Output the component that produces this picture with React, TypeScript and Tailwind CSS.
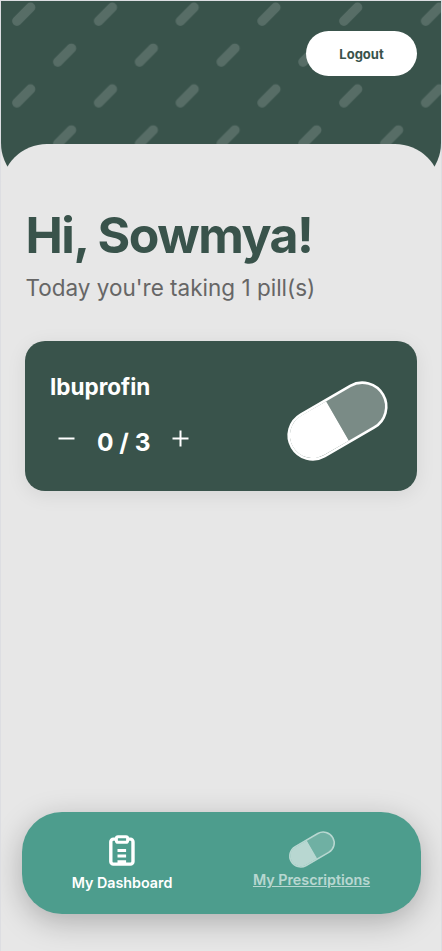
import React, { useState } from "react";

const PILLS = [{ id: "ibuprofin", name: "Ibuprofin", total: 3 }];

function HeaderPattern() {
  return (
    <svg className="absolute inset-0 h-full w-full" aria-hidden="true">
      <defs>
        <pattern id="capsules" width="81.75" height="81.75" patternUnits="userSpaceOnUse">
          <g stroke="#ffffff" strokeOpacity="0.15" strokeWidth="9.6" strokeLinecap="round">
            <path d="M15.9 20 29.5 6.4" />
            <path d="M56.8 60.9 70.4 47.3" />
          </g>
        </pattern>
      </defs>
      <rect width="100%" height="100%" fill="url(#capsules)" />
    </svg>
  );
}

function PillIcon({ className, outline = 2.6 }: { className: string; outline?: number }) {
  return (
    <svg viewBox="0 0 101 80" className={className} aria-hidden="true">
      <g transform="rotate(-30 50.5 40)">
        <path
          d="M50.5 16.8H79.2a23.2 23.2 0 0 1 0 46.4H50.5z"
          fill="#ffffff"
          fillOpacity="0.33"
        />
        <path d="M50.5 17.2H21.8a22.8 22.8 0 0 0 0 45.6H50.5z" fill="#ffffff" />
        <rect x="-2.1" y="16" width="105.2" height="48" rx="24" fill="none" stroke="#ffffff" strokeWidth={outline} />
      </g>
    </svg>
  );
}

function ClipboardIcon() {
  return (
    <svg viewBox="0 0 26 31" className="h-[31px] w-[26px]" fill="none" stroke="#ffffff" aria-hidden="true">
      <rect x="1.8" y="4.1" width="22.2" height="25" rx="2.6" strokeWidth="3.4" />
      <rect x="7.4" y="1.7" width="11.2" height="5.6" rx="1.6" strokeWidth="3" fill="#4d9d8d" />
      <path d="M8.5 15.4h8.6M8.5 20.9h8.6M8.5 26.8h8.6" strokeWidth="3" />
    </svg>
  );
}

function PillCard({ name, total }: { name: string; total: number }) {
  const [taken, setTaken] = useState(0);

  return (
    <div className="flex h-[149.5px] items-center justify-between rounded-[20px] bg-[#39534b] pr-[29px] pl-[25px] shadow-[0_4px_20px_rgba(0,0,0,0.08)]">
      <div className="h-full pt-8 text-white">
        <h2 className="text-[22.5px] leading-7 font-bold">{name}</h2>
        <div className="mt-[23px] flex h-8 items-center">
          <button className="mb-1 ml-2 cursor-pointer" aria-label="Less" onClick={() => setTaken(Math.max(0, taken - 1))}>
            <svg viewBox="0 0 17 17" className="h-[17px] w-[17px]" stroke="currentColor" strokeWidth="2">
              <path d="M0.5 8.5h16" />
            </svg>
          </button>
          <span className="mt-[3px] ml-[22px] w-[53px] text-[24.5px] leading-8 font-bold whitespace-nowrap">
            {taken} / {total}
          </span>
          <button className="mb-1 ml-[21.5px] cursor-pointer" aria-label="More" onClick={() => setTaken(Math.min(total, taken + 1))}>
            <svg viewBox="0 0 17 17" className="h-[17px] w-[17px]" stroke="currentColor" strokeWidth="2">
              <path d="M0.5 8.5h16M8.5 0.5v16" />
            </svg>
          </button>
        </div>
      </div>
      <PillIcon className="mt-2.5 h-20 w-[101px] overflow-visible" />
    </div>
  );
}

export default function App() {
  return (
    <div className="flex h-[951px] w-[442px] flex-col overflow-hidden border border-b-0 border-[#dddee2] bg-[#e7e7e7] font-['Inter',sans-serif]">
      <header className="relative flex h-[188px] shrink-0 items-start justify-end overflow-hidden rounded-b-[46px] bg-[#39534b] pt-[30.4px] pr-6">
        <HeaderPattern />
        <button className="relative h-[45px] w-[111px] cursor-pointer rounded-full bg-white pt-[2px] text-[13px] font-bold text-[#39534b]">
          Logout
        </button>
      </header>

      <main className="relative -mt-[44.6px] flex grow flex-col rounded-t-[46px] bg-[#e7e7e7] px-6 pt-[60.6px]">
        <h1 className="ml-[0.5px] text-[50px] leading-[60px] font-bold tracking-[-1.5px] text-[#39534b]">Hi, Sowmya!</h1>
        <p className="mt-[7px] ml-[0.5px] text-[22.5px] leading-8 text-[#666666]">Today you're taking 1 pill(s)</p>
        <section className="mt-[37.4px] flex flex-col gap-4">
          {PILLS.map((pill) => (
            <PillCard key={pill.id} name={pill.name} total={pill.total} />
          ))}
        </section>

        <nav className="-mx-[3.5px] mt-auto mb-[37px] grid h-[102px] grid-cols-2 rounded-[40px] bg-[#4d9d8d] text-[14.3px] leading-[18px] font-semibold text-white shadow-[0_8px_30px_rgba(0,0,0,0.25)]">
          <a href="#dashboard" className="flex flex-col items-center pt-[23px] pl-[1.5px]">
            <ClipboardIcon />
            <span className="mt-2">My Dashboard</span>
          </a>
          <a href="#prescriptions" className="flex flex-col items-center pt-[19px] pr-[18.5px] opacity-60">
            <PillIcon className="h-[37px] w-[46px] overflow-visible" outline={3.4} />
            <span className="mt-[3px] underline">My Prescriptions</span>
          </a>
        </nav>
      </main>
    </div>
  );
}
